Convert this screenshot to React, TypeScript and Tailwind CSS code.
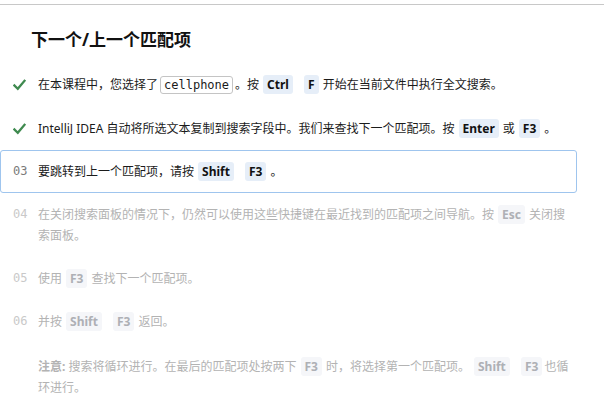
import React from "react";

const font = { fontFamily: '"Noto Sans", "Noto Sans CJK SC", sans-serif' };

function Check() {
  return (
    <svg width="13" height="12" viewBox="0 0 13 12" className="block">
      <path d="M1.5 6.5 L4.8 9.8 L11.5 1.8" fill="none" stroke="#3f8a4f" strokeWidth="2.3" strokeLinecap="square" />
    </svg>
  );
}

function K({ children, muted, last }: { children: React.ReactNode; muted?: boolean; last?: boolean }) {
  return (
    <span
      className={
        (last ? "ml-[4px] mr-[2px] " : "mx-[4px] ") +
        "rounded-[3px] px-[4px] py-[1px] font-bold " +
        (muted ? "bg-[#f5f6f9] text-[#aeb0b5]" : "bg-[#e6eef8] text-[#111]")
      }
    >
      {children}
    </span>
  );
}

function Item({
  mark,
  children,
  active,
  muted,
  extra,
}: {
  mark?: React.ReactNode;
  children: React.ReactNode;
  active?: boolean;
  muted?: boolean;
  extra?: string;
}) {
  return (
    <div
      className={
        "flex rounded-[3px] border py-[10px] pl-[12px] pr-[7px] text-[12px] leading-[21px] " +
        (active ? "border-[#9fc5ee]" : "border-transparent") +
        (muted ? " text-[#b3b3b3]" : " text-[#1b1b1b]") +
        (extra ? " " + extra : "")
      }
    >
      <div className="flex w-[25px] shrink-0 items-start">{mark}</div>
      <div className="min-w-0 flex-1">{children}</div>
    </div>
  );
}

function Num({ n, muted }: { n: string; muted?: boolean }) {
  return (
    <span
      className={"text-[12px] " + (muted ? "text-[#c9c9c9]" : "text-[#7a7a7a]")}
      style={{ fontFamily: '"DejaVu Sans Mono", "Liberation Mono", monospace' }}
    >
      {n}
    </span>
  );
}

export default function App() {
  return (
    <div className="h-[409px] w-[604px] overflow-hidden bg-white" style={font}>
      <div className="h-[4px]" />
      <div className="border-t border-[#c8c8c8]">
        <div className="w-[577px]">
          <h1 className="pl-[31px] pt-[24px] text-[17px] font-bold leading-[22px] text-[#111]">
            下一个/上一个匹配项
          </h1>
          <div className="mt-[12px] flex flex-col">
            <Item
              mark={
                <div className="pt-[5px]">
                  <Check />
                </div>
              }
            >
              在本课程中，您选择了
              <span
                className="mx-[2px] rounded-[3px] border border-[#c4c4c4] px-[3px] py-[1px]"
                style={{ fontFamily: '"DejaVu Sans Mono", "Liberation Mono", monospace' }}
              >
                cellphone
              </span>
              。按<K>Ctrl</K> <K>F</K>开始在当前文件中执行全文搜索。
            </Item>
            <Item
              mark={
                <div className="pt-[5px]">
                  <Check />
                </div>
              }
            >
              IntelliJ IDEA 自动将所选文本复制到搜索字段中。我们来查找下一个匹配项。按<K>Enter</K>或<K>F3</K>。
            </Item>
            <Item active mark={<Num n="03" />}>
              要跳转到上一个匹配项，请按<K>Shift</K> <K>F3</K>。
            </Item>
            <Item muted mark={<Num n="04" muted />}>
              在关闭搜索面板的情况下，仍然可以使用这些快捷键在最近找到的匹配项之间导航。按<K muted>Esc</K>关闭搜索面板。
            </Item>
            <Item muted mark={<Num n="05" muted />}>
              使用<K muted>F3</K>查找下一个匹配项。
            </Item>
            <Item muted mark={<Num n="06" muted />}>
              并按<K muted>Shift</K> <K muted>F3</K>返回。
            </Item>
            <Item muted extra="pt-[12px]">
              <span className="font-bold">注意:</span> 搜索将循环进行。在最后的匹配项处按两下<K muted>F3</K>时，将选择第一个匹配项。<K muted>Shift</K> <K muted last>F3</K>也循环进行。
            </Item>
          </div>
        </div>
      </div>
    </div>
  );
}
